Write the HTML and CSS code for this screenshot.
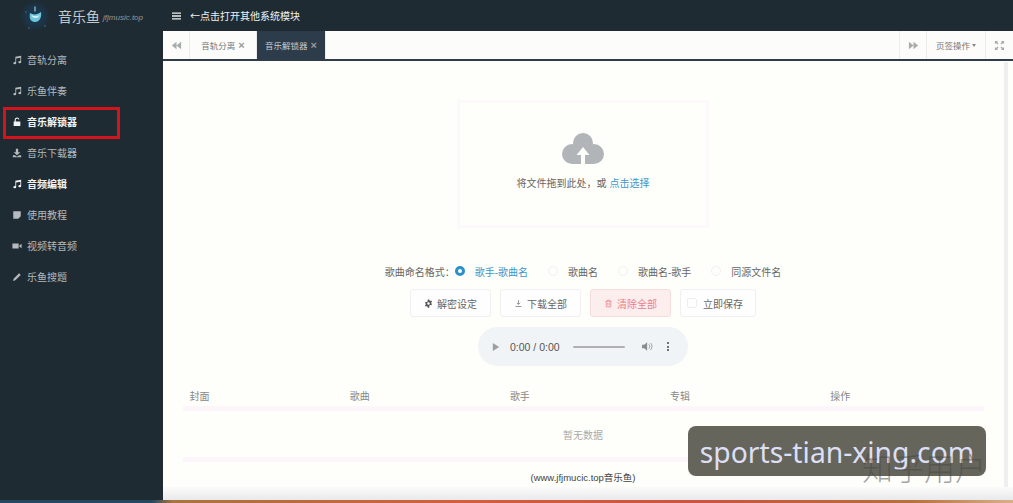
FILE: index.html
```html
<!DOCTYPE html>
<html lang="zh-CN">
<head>
    <meta charset="UTF-8">
    <title>音乐鱼 音乐解锁器</title>
    <link rel="stylesheet" href="styles.css">
</head>
<body>
    <svg class="icon-defs" aria-hidden="true">
        <symbol id="i-music" viewBox="0 0 12 12"><path d="M4 2.2 11 1v7.6a1.7 1.4 0 1 1-1.4-1.4c.2 0 .3 0 .4.1V3.3L5 4.2v5.6A1.7 1.4 0 1 1 3.6 8.4c.2 0 .3 0 .4.1z"/></symbol>
        <symbol id="i-unlock" viewBox="0 0 12 12"><path d="M2 5.5h1.2V3.4a2.9 2.9 0 0 1 5.7-.7l-1.3.3a1.6 1.6 0 0 0-3.1.4v2.1H10v5.4H2z"/></symbol>
        <symbol id="i-download" viewBox="0 0 12 12"><path d="M4.6 1h2.8v4H10L6 8.6 2 5h2.6zM1 8.6h2.6L6 10.4l2.4-1.8H11V11H1z"/></symbol>
        <symbol id="i-book" viewBox="0 0 12 12"><path d="M1.5 1.5h9v6l-3 3h-6zM8 10V7.5h2.3z"/></symbol>
        <symbol id="i-video" viewBox="0 0 12 12"><path d="M.5 3h7.5v6H.5zM8.8 5.4 11.5 3.2v5.6L8.8 6.6z"/></symbol>
        <symbol id="i-pencil" viewBox="0 0 12 12"><path d="M8.5 1.500 10.500 3.500 4 10 1.300 10.700 2 8z"/></symbol>
        <symbol id="i-back" viewBox="0 0 12 12"><path d="M6 2v8L1 6zM11 2v8L6 6z"/></symbol>
        <symbol id="i-forward" viewBox="0 0 12 12"><path d="M1 2v8l5-4zM6 2v8l5-4z"/></symbol>
        <symbol id="i-expand" viewBox="0 0 12 12"><path d="M1 1h3.5L3.3 2.2 5 3.9 3.9 5 2.2 3.3 1 4.5zM11 1v3.5L9.8 3.3 8.1 5 7 3.9 8.7 2.2 7.5 1zM1 11V7.5l1.2 1.2L3.9 7 5 8.1 3.3 9.8 4.5 11zM11 11H7.5l1.2-1.2L7 8.1 8.1 7l1.7 1.7L11 7.5z"/></symbol>
        <symbol id="i-gear" viewBox="0 0 12 12"><path fill-rule="evenodd" d="M5 .5h2l.3 1.5 1 .5 1.4-.6 1 1.7-1.1 1v1.1l1.100 1-1 1.700-1.400-.5-1 .5L7 11.500H5l-.3-1.500-1-.5-1.400.5-1-1.700 1.100-1V6.200L1.300 5.200l1-1.700 1.400.6 1-.6zM6 4.200a1.800 1.800 0 1 0 0 3.600 1.800 1.800 0 0 0 0-3.600z"/></symbol>
    </svg>

    <header class="topbar">
        <div class="brand">
            <svg class="brand-logo" viewBox="0 0 30 30">
                <defs>
                    <radialGradient id="logo-bg">
                        <stop offset="0" stop-color="#1c3a50"/>
                        <stop offset=".7" stop-color="#1b3346"/>
                        <stop offset="1" stop-color="#1f2b33"/>
                    </radialGradient>
                </defs>
                <rect width="30" height="30" fill="url(#logo-bg)"/>
                <circle cx="6" cy="11" r="1" fill="#3a566c"/>
                <circle cx="25" cy="25" r="1" fill="#3a566c"/>
                <circle cx="9" cy="27" r="1" fill="#3a566c"/>
                <path d="M10 12c3 2 7 2 11-1 1 5-1.500 10-6 10s-6-4-5-9z" fill="#6fc6dc"/>
                <path d="M11.500 14c2 1.500 6 1.500 8 0-.5 2-2 3-4 3s-3.500-1-4-3z" fill="#d8f2f7"/>
                <path d="M15 5.500v5" stroke="#8fd0e0" stroke-width="1.200"/>
            </svg>
            <span class="brand-name">音乐鱼</span>
            <span class="brand-site">jfjmusic.top</span>
        </div>
        <div class="top-hint">
            <svg class="menu-bars" viewBox="0 0 10 8"><path d="M0 0h10v1.600H0zM0 3.200h10v1.600H0zM0 6.400h10V8H0z"/></svg>
            <span>←点击打开其他系统模块</span>
        </div>
    </header>

    <div class="layout">
        <nav class="sidebar">
            <a class="nav-item"><svg class="nav-icon"><use href="#i-music"/></svg>音轨分离</a>
            <a class="nav-item"><svg class="nav-icon"><use href="#i-music"/></svg>乐鱼伴奏</a>
            <a class="nav-item is-marked"><svg class="nav-icon"><use href="#i-unlock"/></svg>音乐解锁器</a>
            <a class="nav-item"><svg class="nav-icon"><use href="#i-download"/></svg>音乐下载器</a>
            <a class="nav-item is-bright"><svg class="nav-icon"><use href="#i-music"/></svg>音频编辑</a>
            <a class="nav-item"><svg class="nav-icon"><use href="#i-book"/></svg>使用教程</a>
            <a class="nav-item"><svg class="nav-icon"><use href="#i-video"/></svg>视频转音频</a>
            <a class="nav-item"><svg class="nav-icon"><use href="#i-pencil"/></svg>乐鱼搜题</a>
        </nav>

        <main class="main">
            <div class="tabs">
                <button class="tab-tool tab-tool-left"><svg class="tool-icon"><use href="#i-back"/></svg></button>
                <div class="tab">音轨分离 <span class="tab-close">×</span></div>
                <div class="tab is-active">音乐解锁器 <span class="tab-close">×</span></div>
                <div class="tabs-fill"></div>
                <button class="tab-tool"><svg class="tool-icon"><use href="#i-forward"/></svg></button>
                <button class="tab-tool tab-menu">页签操作 <span class="caret"></span></button>
                <button class="tab-tool tab-full"><svg class="tool-icon"><use href="#i-expand"/></svg></button>
            </div>

            <div class="content">
                <div class="scroll-thumb"></div>

                <div class="upload-box">
                    <svg class="cloud" viewBox="0 0 42 32">
                        <circle cx="21" cy="10" r="10"/>
                        <circle cx="10" cy="21" r="10"/>
                        <circle cx="32" cy="21" r="10"/>
                        <rect x="10" y="12" width="22" height="19"/>
                        <path class="cloud-arrow" d="M21 14l6.500 8H23v10h-4V22h-4.500z"/>
                    </svg>
                    <p class="upload-text">将文件拖到此处，或 <span class="link">点击选择</span></p>
                </div>

                <div class="name-format">
                    <span class="format-label">歌曲命名格式：</span>
                    <label class="radio is-on"><i></i>歌手-歌曲名</label>
                    <label class="radio"><i></i>歌曲名</label>
                    <label class="radio"><i></i>歌曲名-歌手</label>
                    <label class="radio"><i></i>同源文件名</label>
                </div>

                <div class="actions">
                    <button class="btn"><svg class="btn-icon"><use href="#i-gear"/></svg>解密设定</button>
                    <button class="btn">
                        <svg class="btn-icon btn-line" viewBox="0 0 12 12"><path d="M6 1.500v5.500M3.800 5 6 7.200 8.200 5M2 10h8"/></svg>下载全部
                    </button>
                    <button class="btn btn-danger">
                        <svg class="btn-icon btn-line" viewBox="0 0 12 12"><path d="M2 3h8M4.500 3V1.500h3V3M3 3v7.500h6V3M5 5v3.500M7 5v3.500"/></svg>清除全部
                    </button>
                    <button class="btn btn-save"><span class="save-box"></span>立即保存</button>
                </div>

                <div class="player">
                    <svg class="player-play" viewBox="0 0 10 12"><path d="M1 1l8 5-8 5z"/></svg>
                    <span class="player-time">0:00 / 0:00</span>
                    <div class="player-track"></div>
                    <svg class="player-vol" viewBox="0 0 14 12"><path d="M0 4h2.500L6 1v10L2.500 8H0z"/><path d="M8 3.500c1.300 1.300 1.300 3.700 0 5M10 2c2.200 2.200 2.200 5.800 0 8" fill="none" stroke="#8b8e90" stroke-width="1"/></svg>
                    <span class="player-more"><i></i><i></i><i></i></span>
                </div>

                <table class="songs">
                    <thead>
                        <tr><th>封面</th><th>歌曲</th><th>歌手</th><th>专辑</th><th>操作</th></tr>
                    </thead>
                    <tbody>
                        <tr><td class="empty" colspan="5">暂无数据</td></tr>
                    </tbody>
                </table>

                <p class="site-note">(www.jfjmucic.top音乐鱼)</p>
            </div>
            <div class="main-foot"></div>
        </main>
    </div>
    <div class="page-edge"></div>

    <div class="stamp">sports-tian-xing.com</div>
    <div class="user-mark">知乎用户</div>
</body>
</html>
```

FILE: styles.css
```css
:root {
    --dark: #1f2b33;
    --text-side: #b4babd;
    --blue: #3d97c9;
    --line: #fcf6fb;
    --paper: #fefefb;
}
html, body {
    height: 100%;
}
body {
    margin: 0;
    display: flex;
    flex-direction: column;
    overflow: hidden;
    background: var(--dark);
    color: #555;
    font-family: "Liberation Sans", "Noto Sans CJK SC", sans-serif;
    font-size: 10px;
}
.icon-defs { display: none; }
button { font-family: inherit; }

.topbar {
    flex: none;
    height: 31px;
    display: flex;
    align-items: center;
    color: #eef1f2;
}
.brand {
    width: 162px;
    padding-left: 20px;
    box-sizing: border-box;
    display: flex;
    align-items: center;
}
.brand-logo { width: 30px; height: 30px; margin-right: 8px; }
.brand-name { font-size: 14px; color: #c3c8ca; }
.brand-site { font-size: 8px; font-style: italic; color: #8f979b; margin: 3px 0 0 3px; }
.top-hint {
    display: flex;
    align-items: center;
    gap: 9px;
    padding-left: 10px;
    font-family: "Noto Sans CJK SC", sans-serif;
}
.menu-bars { width: 9px; height: 8px; fill: #eef1f2; }

.layout {
    flex: 1;
    min-height: 0;
    display: flex;
}
.sidebar {
    flex: none;
    width: 162px;
    padding-top: 13px;
    box-sizing: border-box;
}
.nav-item {
    position: relative;
    height: 31px;
    display: flex;
    align-items: center;
    padding-left: 12px;
    color: var(--text-side);
}
.nav-item.is-marked, .nav-item.is-bright { color: #f1f3f4; font-weight: 700; }
.nav-item.is-marked::after {
    content: "";
    position: absolute;
    left: 3px;
    top: 1px;
    width: 111px;
    height: 26px;
    border: 3px solid #d3141d;
}
.nav-icon { width: 10px; height: 10px; margin-right: 5px; fill: currentColor; }

.main {
    flex: 1;
    min-width: 0;
    display: flex;
    flex-direction: column;
    background: var(--paper);
    margin-left: 1px;
    overflow: hidden;
}
.tabs {
    flex: none;
    height: 28px;
    display: flex;
    border-bottom: 2px solid #2f3d48;
    background: #fcfcfb;
    font-size: 8.5px;
    color: #777;
}
.tab-tool {
    width: 27px;
    padding: 0;
    border: 0;
    border-left: 1px solid #ececec;
    background: none;
    color: #777;
    font-size: inherit;
    display: flex;
    align-items: center;
    justify-content: center;
}
.tab-tool-left { border-left: 0; border-right: 1px solid #ececec; }
.tab-menu { width: 59px; gap: 2px; }
.tab-full { width: 28px; }
.tool-icon { width: 11px; height: 11px; fill: #a8abad; }
.caret {
    border-left: 2.5px solid transparent;
    border-right: 2.5px solid transparent;
    border-top: 3px solid #888;
}
.tab {
    width: 67px;
    display: flex;
    align-items: center;
    justify-content: center;
    gap: 3px;
    border-right: 1px solid #ececec;
    box-sizing: border-box;
}
.tab.is-active {
    width: 69px;
    background: #2c3c4a;
    color: #c9ced2;
}
.tab-close { font-size: 11px; font-weight: 700; line-height: 1; color: #999; }
.tabs-fill { flex: 1; }

.content {
    position: relative;
    flex: 1;
    min-height: 0;
    display: flex;
    flex-direction: column;
    align-items: center;
    padding-right: 10px;
    padding-top: 39px;
    box-sizing: border-box;
}
.content > * { flex-shrink: 0; }
.scroll-thumb {
    position: absolute;
    right: 5px;
    top: 1px;
    bottom: 0;
    width: 4px;
    background: #efefef;
}

.upload-box {
    width: 252px;
    height: 128px;
    box-sizing: border-box;
    border: 3px solid #fdf8fc;
    display: flex;
    flex-direction: column;
    align-items: center;
    padding-top: 30px;
}
.cloud { width: 42px; height: 32px; fill: #b2b5b8; }
.cloud-arrow { fill: var(--paper); }
.upload-text { margin: 12px 0 0; line-height: 14px; color: #666; }
.link { color: var(--blue); }

.name-format {
    margin-top: 35px;
    height: 16px;
    display: flex;
    align-items: center;
    color: #666;
}
.radio {
    display: flex;
    align-items: center;
    gap: 10px;
    margin-right: 20px;
}
.radio:last-child { margin-right: 0; }
.radio i {
    width: 8px;
    height: 8px;
    border: 1px solid #f1f1f1;
    border-radius: 50%;
}
.radio.is-on { color: var(--blue); }
.radio.is-on i {
    width: 4px;
    height: 4px;
    border: 3px solid #2a8fcb;
    background: #fff;
}

.actions {
    margin-top: 10px;
    display: flex;
    gap: 9px;
}
.btn {
    width: 81px;
    height: 28px;
    display: flex;
    align-items: center;
    justify-content: center;
    gap: 4px;
    padding: 0;
    border: 1px solid #f1eff3;
    border-radius: 3px;
    background: #fffefe;
    color: #666;
    font-size: 10px;
}
.btn-icon { width: 9px; height: 9px; fill: #555; }
.btn-line { fill: none; stroke: #777; stroke-width: 1; }
.btn-danger {
    background: #fdeeee;
    border-color: #f7dcdc;
    color: #e9808a;
}
.btn-danger .btn-line { stroke: #e9808a; }
.btn-save { width: 76px; gap: 6px; justify-content: flex-start; padding-left: 6px; }
.save-box { width: 8px; height: 8px; border: 1px solid #eeeeee; border-radius: 2px; }

.player {
    margin-top: 10px;
    width: 210px;
    height: 39px;
    box-sizing: border-box;
    padding: 0 14px;
    display: flex;
    align-items: center;
    border-radius: 20px;
    background: #f1f4f6;
    color: #555;
    font-size: 10.5px;
}
.player-play { width: 8px; height: 10px; fill: #9c9fa1; margin-right: 10px; }
.player-time { width: 63px; }
.player-track { width: 52px; height: 2px; border-radius: 1px; background: #aeb0b2; }
.player-vol { width: 12px; height: 11px; fill: #8b8e90; margin-left: 17px; }
.player-more {
    margin-left: 13px;
    display: flex;
    flex-direction: column;
    gap: 1.5px;
}
.player-more i { width: 2px; height: 2px; border-radius: 50%; background: #444; }

.songs {
    margin-top: 19px;
    width: 801px;
    table-layout: fixed;
    border-collapse: collapse;
    color: #888;
}
.songs th {
    height: 21px;
    padding: 0 7px;
    text-align: left;
    font-weight: 400;
    border-bottom: 5px solid var(--line);
}
.songs td.empty {
    height: 44px;
    text-align: center;
    color: #aaa;
    border-bottom: 5px solid var(--line);
}
.site-note {
    margin: 9px 0 0;
    font-size: 9.5px;
    line-height: 14px;
    color: #444;
}
.main-foot {
    flex: none;
    height: 13px;
    background: linear-gradient(#fbfbfa, #e8e9ec);
}
.page-edge {
    flex: none;
    height: 3px;
    background: linear-gradient(90deg, #25485f 0, #25485f 15%, #a8743f 17%, #d0603f 45%, #c8553f 70%, #b5703c 90%, #d9b08a 100%);
}

.stamp {
    position: absolute;
    left: 688px;
    top: 426px;
    width: 298px;
    height: 50px;
    box-sizing: border-box;
    padding-top: 3px;
    border-radius: 8px;
    background: #65655c;
    color: #dcdff5;
    font-family: "Noto Sans", sans-serif;
    font-size: 28.3px;
    line-height: 47px;
    text-align: center;
}
.user-mark {
    position: absolute;
    left: 862px;
    top: 447px;
    font-family: "Noto Sans CJK SC", sans-serif;
    font-size: 31px;
    font-weight: 300;
    line-height: 40px;
    color: rgba(70, 70, 65, .5);
}
```
